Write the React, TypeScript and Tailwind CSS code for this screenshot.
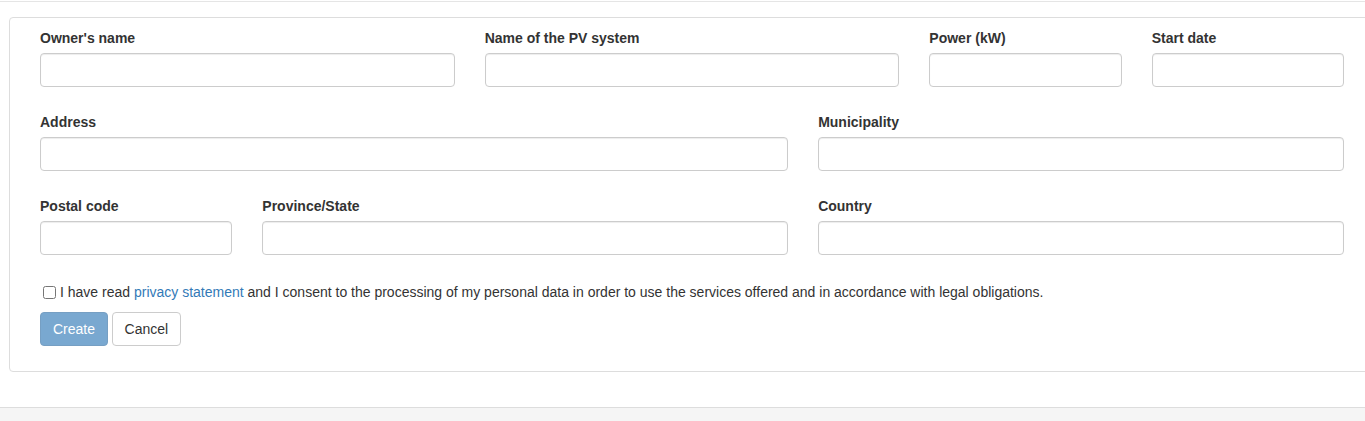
import React from "react";

function Field({ label, span }: { label: string; span: string }) {
  return (
    <div className={span}>
      <label className="block font-bold text-[14px] leading-[20px] mb-[5px] text-[#333]">{label}</label>
      <input
        type="text"
        className="block w-full h-[34px] border border-[#ccc] rounded-[4px] bg-white shadow-[inset_0_1px_1px_rgba(0,0,0,0.075)] outline-none"
      />
    </div>
  );
}

export default function App() {
  return (
    <div className="w-full overflow-hidden bg-white text-[#333]" style={{ fontFamily: '"Liberation Sans", Arial, sans-serif' }}>
      <div className="pt-px">
        <div className="h-[16px] border-t border-[#e5e5e5]" />
      </div>
      <div className="ml-[9px] w-[1366px] border border-[#ddd] rounded-[4px] pl-[30px] pt-[10px] pb-[25px]">
        <div className="w-[1304px] grid grid-cols-12 gap-x-[30px] gap-y-[25px]">
          <Field label="Owner's name" span="col-span-4" />
          <Field label="Name of the PV system" span="col-span-4" />
          <Field label="Power (kW)" span="col-span-2" />
          <Field label="Start date" span="col-span-2" />
          <Field label="Address" span="col-span-7" />
          <Field label="Municipality" span="col-span-5" />
          <Field label="Postal code" span="col-span-2" />
          <Field label="Province/State" span="col-span-5" />
          <Field label="Country" span="col-span-5" />
        </div>
        <div className="mt-[27px] flex items-center text-[14px] leading-[20px] h-[20px]">
          <input type="checkbox" className="m-0 ml-[3px] mr-[4px] w-[13px] h-[13px]" />
          <span>
            I have read <a className="text-[#337ab7]">privacy statement</a> and I consent to the processing of my personal data in order to use the services offered and in accordance with legal obligations.
          </span>
        </div>
        <div className="mt-[10px] flex gap-[4px]">
          <button className="h-[34px] px-[12px] text-[14px] leading-[20px] text-white bg-[#337ab7] border border-[#2e6da4] rounded-[4px] opacity-65">
            Create
          </button>
          <button className="h-[34px] px-[11.5px] text-[14px] leading-[20px] text-[#333] bg-white border border-[#ccc] rounded-[4px]">
            Cancel
          </button>
        </div>
      </div>
      <div className="h-[35px]" />
      <div className="h-[14px] border-t border-[#ddd] bg-[#f5f5f5]" />
    </div>
  );
}
